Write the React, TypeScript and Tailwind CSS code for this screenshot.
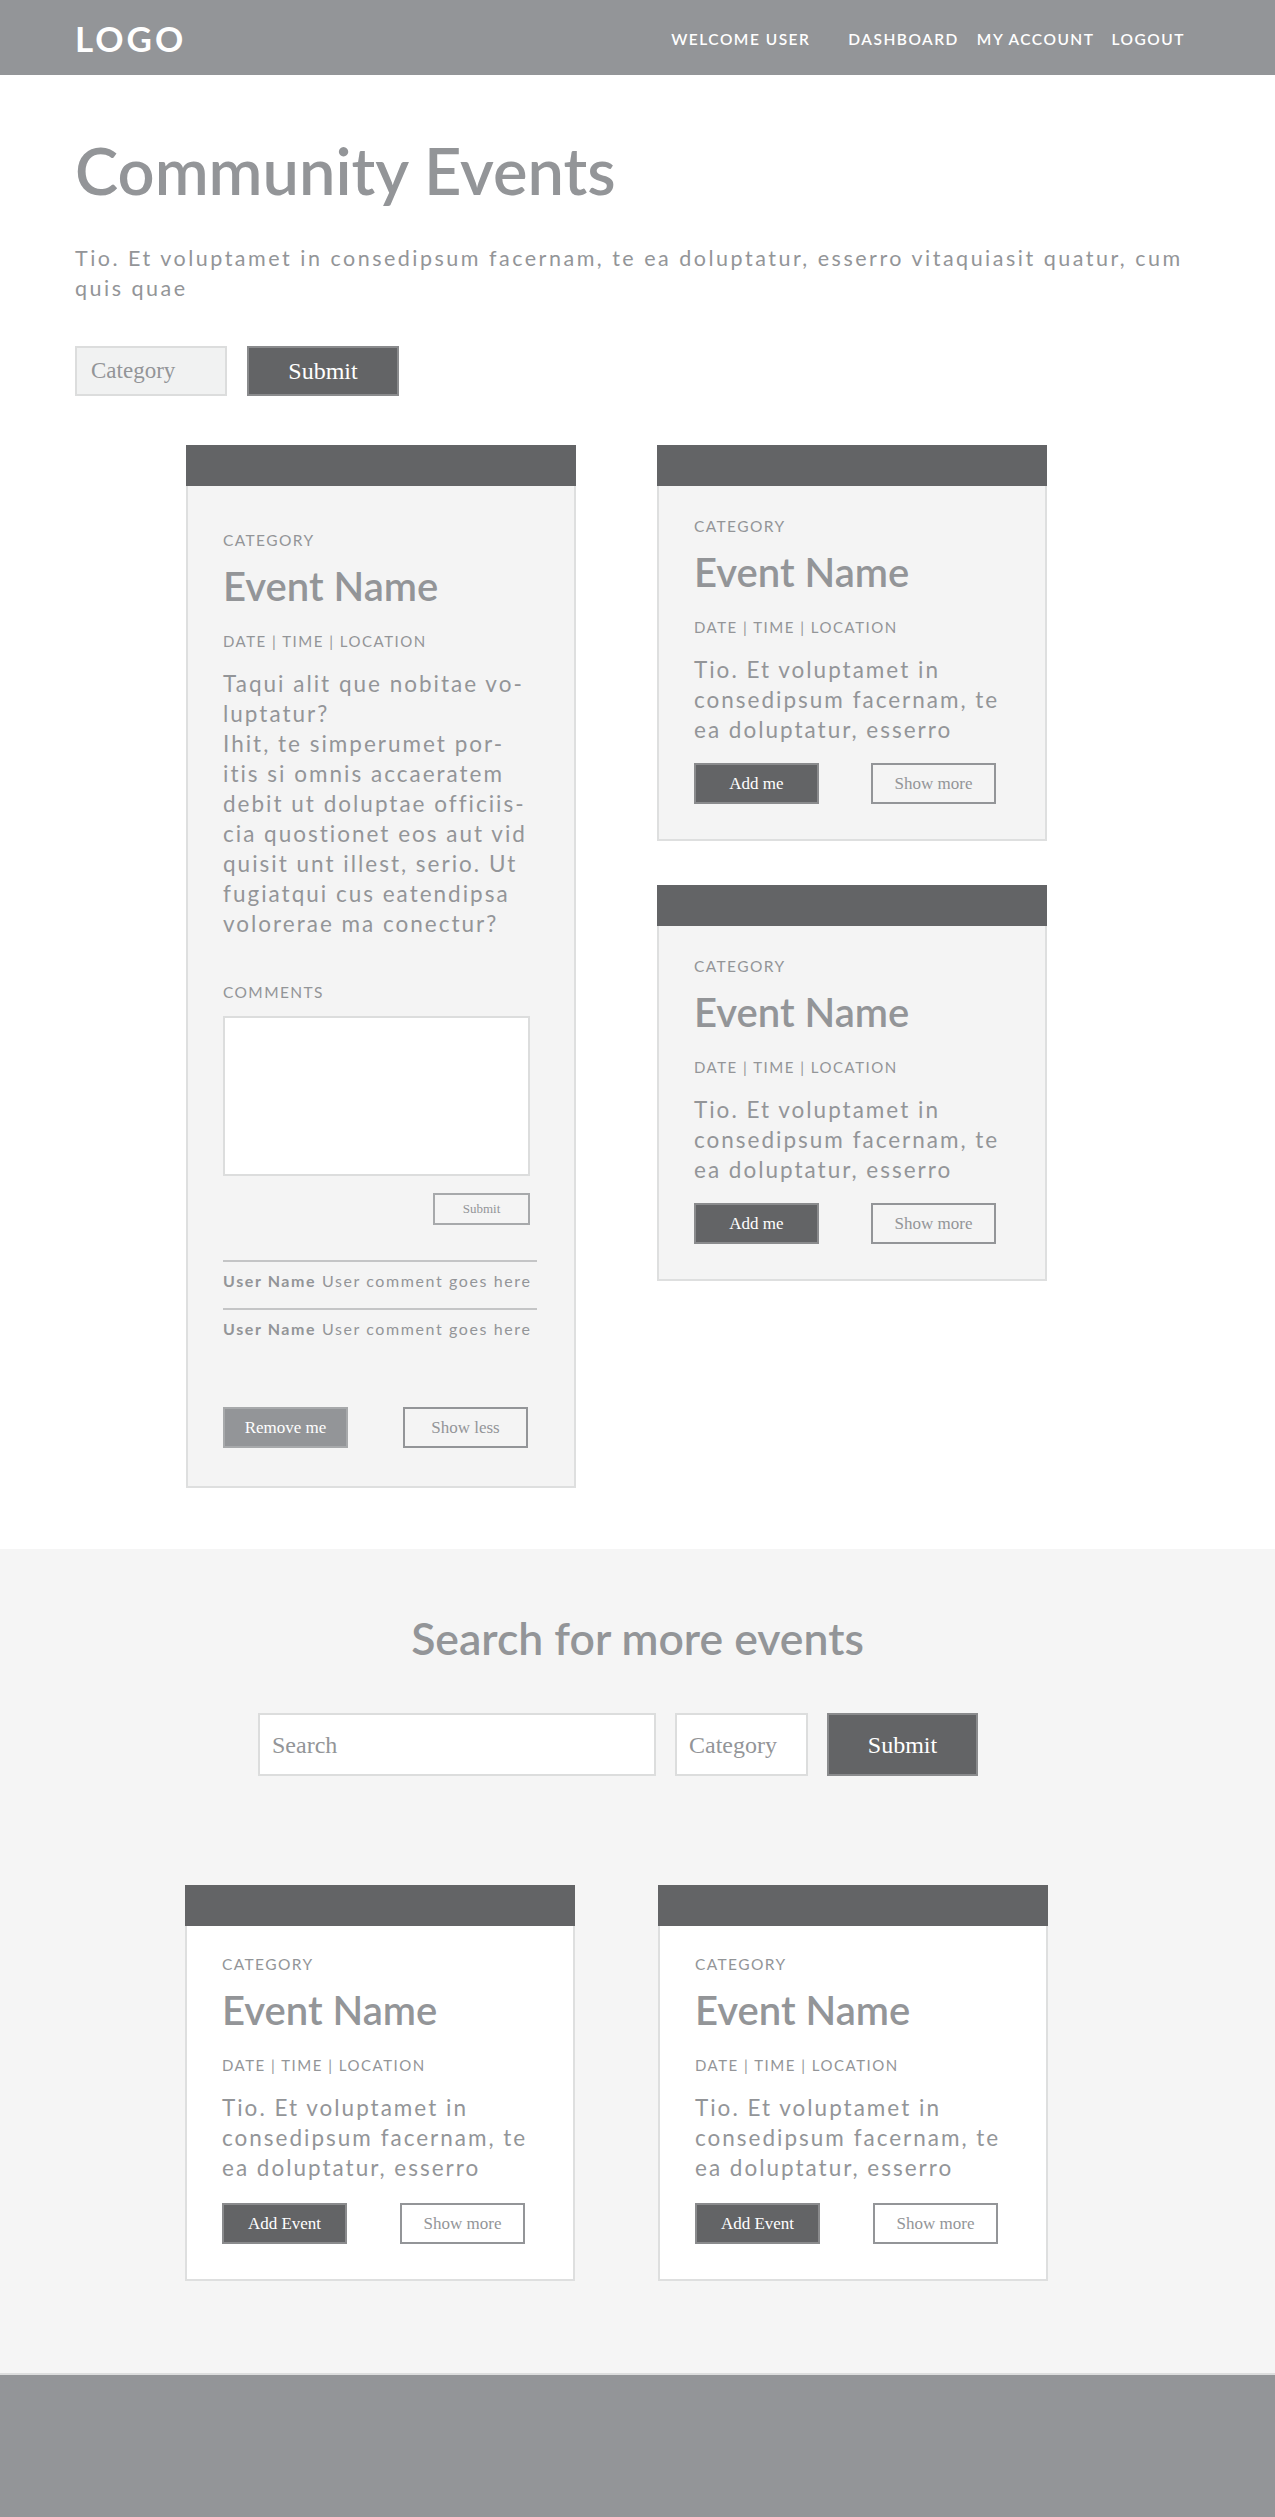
import React from 'react';

const serif = "font-['Liberation_Serif',serif]";

const Header = () => (
  <header className="h-[75px] bg-[#939598] flex items-center justify-between pl-[75px] pr-[90px]">
    <div className="text-white font-bold text-[35px] tracking-[3px] leading-none pt-[2px]">LOGO</div>
    <nav className="flex items-center text-white font-semibold text-[15.5px] tracking-[1.5px] pt-[5px]">
      <span className="mr-[38px]">WELCOME USER</span>
      <a className="mr-[18px]">DASHBOARD</a>
      <a className="mr-[17px]">MY ACCOUNT</a>
      <a>LOGOUT</a>
    </nav>
  </header>
);

const DarkButton = ({ label }: { label: string }) => (
  <button className={`w-[125px] h-[41px] bg-[#636466] border-2 border-[#8a8b8d] text-white text-[17px] ${serif}`}>
    {label}
  </button>
);

const OutlineButton = ({ label }: { label: string }) => (
  <button className={`w-[125px] h-[41px] border-2 border-[#939598] text-[#939598] text-[17px] ${serif}`}>
    {label}
  </button>
);

type CardProps = {
  white?: boolean;
  topPad: string;
  lines: string[];
  children: React.ReactNode;
};

// shared event card: dark strip on top, grey or white body
const EventCard = ({ white, topPad, lines, children }: CardProps) => (
  <div className="w-[390px]">
    <div className="h-[41px] bg-[#636466]" />
    <div
      className={`border-2 border-t-0 border-[#dedfdf] pl-[35px] pr-[10px] pb-[35px] ${topPad} ${
        white ? 'bg-white' : 'bg-[#f4f4f4]'
      }`}
    >
      <div className="text-[15.5px] leading-[18px] tracking-[1.4px] text-[#939598]">CATEGORY</div>
      <h3 className="mt-[12px] text-[40px] leading-[50px] font-semibold text-[#939598]">Event Name</h3>
      <div className="mt-[21px] text-[15px] leading-[18px] tracking-[1.5px] text-[#939598]">
        DATE | TIME | LOCATION
      </div>
      <p className="mt-[19px] text-[22.5px] leading-[30px] tracking-[2px] text-[#939598]">
        {lines.map((l, i) => (
          <span key={i} className="block whitespace-nowrap">
            {l}
          </span>
        ))}
      </p>
      {children}
    </div>
  </div>
);

const shortText = ['Tio. Et voluptamet in', 'consedipsum facernam, te', 'ea doluptatur, esserro'];

const longText = [
  'Taqui alit que nobitae vo-',
  'luptatur?',
  'Ihit, te simperumet por-',
  'itis si omnis accaeratem',
  'debit ut doluptae officiis-',
  'cia quostionet eos aut vid',
  'quisit unt illest, serio. Ut',
  'fugiatqui cus eatendipsa',
  'volorerae ma conectur?',
];

const Comment = () => (
  <div className="border-t-2 border-[#c4c5c6] pt-[10px] pb-[19px] text-[16px] leading-[17px] tracking-[1.6px] text-[#939598] whitespace-nowrap">
    <span className="font-bold">User Name</span> User comment goes here
  </div>
);

export default function App() {
  return (
    <div className="min-h-[2517px] bg-white font-[Lato,sans-serif] flex flex-col">
      <Header />

      <main className="pl-[75px] pr-[90px] pt-[63px] pb-[61px]">
        <h1 className="text-[65px] leading-[65px] font-semibold text-[#939598]">Community Events</h1>
        <p className="mt-[40px] text-[21.5px] leading-[30px] tracking-[2.5px] text-[#939598] max-w-[1115px]">
          Tio. Et voluptamet in consedipsum facernam, te ea doluptatur, esserro vitaquiasit quatur, cum quis quae
        </p>

        <div className="mt-[43px] flex gap-[20px]">
          <div
            className={`w-[152px] h-[50px] bg-[#f1f2f2] border-2 border-[#dcdddd] flex items-center pl-[14px] text-[23px] text-[#939598] ${serif}`}
          >
            Category
          </div>
          <button className={`w-[152px] h-[50px] bg-[#636466] border-2 border-[#8a8b8d] text-white text-[24px] ${serif}`}>
            Submit
          </button>
        </div>

        <div className="mt-[49px] ml-[111px] flex items-start gap-[81px]">
          <EventCard topPad="pt-[45px]" lines={longText}>
            <div className="mt-[44px] text-[15.5px] leading-[18px] tracking-[1.4px] text-[#939598]">COMMENTS</div>
            <div className="mt-[15px] w-[307px] h-[160px] bg-white border-2 border-[#dcdddd]" />
            <div className="w-[307px] flex justify-end mt-[17px]">
              <button className={`w-[97px] h-[32px] border-2 border-[#a7a9ab] text-[#939598] text-[13px] ${serif}`}>
                Submit
              </button>
            </div>
            <div className="mt-[35px] w-[314px]">
              <Comment />
              <Comment />
            </div>
            <div className="mt-[51px] flex gap-[55px] pb-[3px]">
              <button className={`w-[125px] h-[41px] bg-[#939598] border-2 border-[#a7a9ab] text-white text-[17px] ${serif}`}>
                Remove me
              </button>
              <OutlineButton label="Show less" />
            </div>
          </EventCard>

          <div className="flex flex-col gap-[44px]">
            <EventCard topPad="pt-[31px]" lines={shortText}>
              <div className="mt-[18px] flex gap-[52px]">
                <DarkButton label="Add me" />
                <OutlineButton label="Show more" />
              </div>
            </EventCard>
            <EventCard topPad="pt-[31px]" lines={shortText}>
              <div className="mt-[18px] flex gap-[52px]">
                <DarkButton label="Add me" />
                <OutlineButton label="Show more" />
              </div>
            </EventCard>
          </div>
        </div>
      </main>

      <section className="bg-[#f5f5f5] pt-[63px] pb-[92px]">
        <h2 className="text-center text-[44.5px] leading-[52px] font-semibold text-[#939598]">Search for more events</h2>
        <div className="mt-[49px] flex justify-center gap-[19px] pr-[39px]">
          <div
            className={`w-[398px] h-[63px] bg-white border-2 border-[#dcdddd] flex items-center pl-[12px] text-[24px] text-[#939598] ${serif}`}
          >
            Search
          </div>
          <div
            className={`w-[133px] h-[63px] bg-white border-2 border-[#dcdddd] flex items-center pl-[12px] text-[24px] text-[#939598] ${serif}`}
          >
            Category
          </div>
          <button className={`w-[151px] h-[63px] bg-[#636466] border-2 border-[#8a8b8d] text-white text-[24px] ${serif}`}>
            Submit
          </button>
        </div>

        <div className="mt-[109px] ml-[185px] flex items-start gap-[83px]">
          <EventCard white topPad="pt-[29px]" lines={shortText}>
            <div className="mt-[20px] flex gap-[53px]">
              <DarkButton label="Add Event" />
              <OutlineButton label="Show more" />
            </div>
          </EventCard>
          <EventCard white topPad="pt-[29px]" lines={shortText}>
            <div className="mt-[20px] flex gap-[53px]">
              <DarkButton label="Add Event" />
              <OutlineButton label="Show more" />
            </div>
          </EventCard>
        </div>
      </section>

      <footer className="flex-1 min-h-[143px] bg-[#939598] border-t-2 border-[#dcdddd]" />
    </div>
  );
}
